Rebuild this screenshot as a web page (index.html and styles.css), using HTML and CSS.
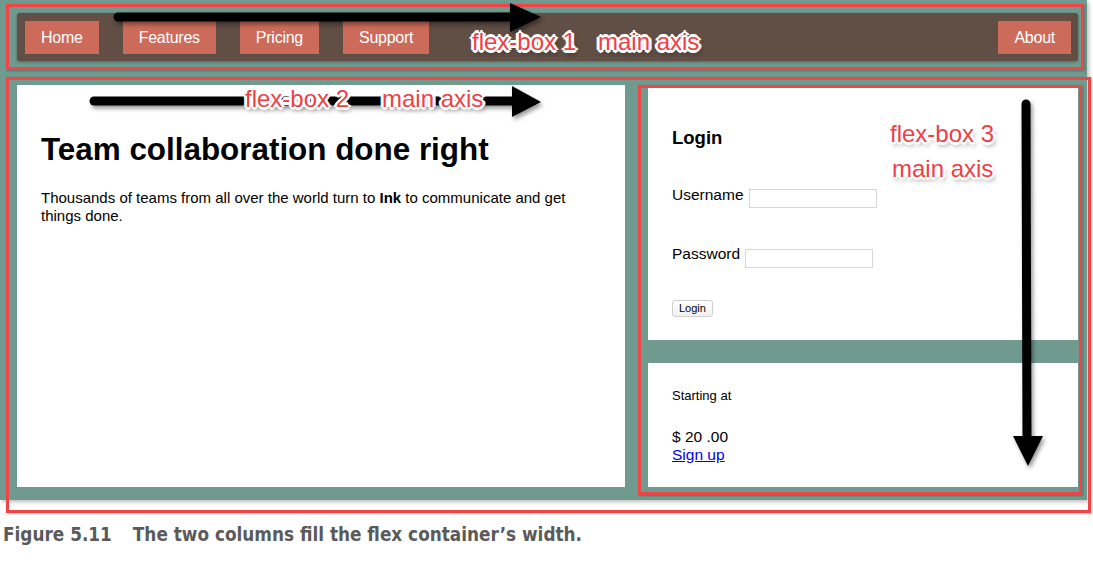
FILE: index.html
```html
<!DOCTYPE html>
<html>
<head>
<meta charset="utf-8">
<link rel="stylesheet" href="styles.css">
</head>
<body>
<div class="figure">
  <div class="screen">
    <nav class="site-nav">
      <a class="nav-link" href="#">Home</a>
      <a class="nav-link" href="#">Features</a>
      <a class="nav-link" href="#">Pricing</a>
      <a class="nav-link" href="#">Support</a>
      <a class="nav-link nav-right" href="#">About</a>
    </nav>
    <main class="columns">
      <section class="tile column-main">
        <h2 class="hero-title">Team collaboration done right</h2>
        <p class="hero-text">Thousands of teams from all over the world turn to <b>Ink</b> to communicate and get things done.</p>
      </section>
      <aside class="column-sidebar">
        <div class="tile login">
          <h3 class="login-title">Login</h3>
          <div class="field field-user"><span class="field-label">Username</span><span class="input"></span></div>
          <div class="field field-pass"><span class="field-label">Password</span><span class="input"></span></div>
          <span class="login-btn">Login</span>
        </div>
        <div class="tile pricing">
          <p class="price-intro">Starting at</p>
          <p class="price">$ 20 .00</p>
          <a class="signup" href="#">Sign up</a>
        </div>
      </aside>
    </main>
  </div>
  <p class="caption"><span class="fig-no">Figure 5.11</span>The two columns fill the flex container’s width.</p>

  <div class="frame frame-1"></div>
  <div class="frame frame-2"></div>
  <div class="frame frame-3"></div>

  <svg class="arrows" width="1093" height="569" viewBox="0 0 1093 569">
    <g fill="#000" stroke="#000">
      <line x1="118" y1="17" x2="514" y2="17" stroke-width="9" stroke-linecap="round"/>
      <polygon points="510,3 541,17 510,32" stroke="none"/>
      <line x1="94" y1="101" x2="515" y2="101" stroke-width="9" stroke-linecap="round"/>
      <polygon points="512,86 541,102 512,117" stroke="none"/>
      <line x1="1026" y1="104" x2="1027" y2="440" stroke-width="9" stroke-linecap="round"/>
      <polygon points="1013,436 1043,436 1028,466" stroke="none"/>
    </g>
  </svg>

  <span class="note note-1a">flex-box 1</span>
  <span class="note note-1b">main axis</span>
  <span class="note note-2a">flex-box 2</span>
  <span class="note note-2b">main axis</span>
  <span class="note note-3a">flex-box 3</span>
  <span class="note note-3b">main axis</span>
</div>
</body>
</html>
```

FILE: styles.css
```css
* { box-sizing: border-box; }
html, body { margin: 0; padding: 0; background: #fff; }
body { font-family: "Liberation Sans", Arial, sans-serif; color: #000; }

.figure { position: relative; width: 1093px; height: 569px; overflow: hidden; }

.screen {
  width: 1087px;
  height: 500px;
  background: #709a8f;
  padding: 13px 9px 13px 17px;
  box-shadow: 2px 2px 4px rgba(0,0,0,.25);
}

.site-nav {
  display: flex;
  height: 48px;
  padding: 8px 7px 7px 8px;
  background: #614e45;
  border-radius: 3px;
  box-shadow: 0 1px 3px rgba(0,0,0,.35);
}
.nav-link {
  display: block;
  padding: 8px 16px;
  background: #cc6b5a;
  color: #fff;
  text-decoration: none;
  font-size: 16px;
  line-height: 17px;
  letter-spacing: -0.25px;
}
.nav-link + .nav-link { margin-left: 24px; }
.nav-link.nav-right { margin-left: auto; }

.columns {
  display: flex;
  gap: 23px;
  height: 402px;
  margin-top: 24px;
}
.tile { background: #fff; }
.column-main {
  width: 608px;
  padding: 47px 24px 24px 24px;
}
.hero-title {
  margin: 0;
  font-size: 31.4px;
  line-height: 36px;
  font-weight: bold;
}
.hero-text {
  margin: 21px 0 0;
  font-size: 15px;
  line-height: 18px;
}

.column-sidebar {
  flex: 1;
  display: flex;
  flex-direction: column;
  gap: 23px;
}
.login {
  height: 255px;
  padding: 42px 24px 0 24px;
}
.login-title {
  margin: 0;
  font-size: 18.5px;
  line-height: 21px;
  font-weight: bold;
}
.field {
  display: flex;
  align-items: flex-start;
  font-size: 15.5px;
  line-height: 18px;
}
.field-user { margin-top: 38px; }
.field-pass { margin-top: 37px; }
.input {
  display: block;
  width: 128px;
  height: 19px;
  margin: 3px 0 0 5px;
  border: 1px solid #d6d6d6;
  background: #fff;
}
.field-pass .input { margin-top: 4px; }
.login-btn {
  display: inline-block;
  margin-top: 32px;
  height: 17px;
  padding: 0 6px;
  border: 1px solid #cfcfcf;
  border-radius: 3px;
  background: linear-gradient(#fff, #f1f1f1);
  font-size: 11px;
  line-height: 15px;
}

.pricing {
  flex: 1;
  padding: 25px 24px 0 24px;
}
.price-intro {
  margin: 0;
  font-size: 13px;
  line-height: 16px;
}
.price {
  margin: 24px 0 0;
  font-size: 15.5px;
  line-height: 18px;
}
.signup {
  display: block;
  font-size: 15.5px;
  line-height: 18px;
  color: #0000ee;
  text-decoration: underline;
}

.caption {
  margin: 24px 0 0 3px;
  font-family: "DejaVu Sans Condensed", "DejaVu Sans", sans-serif;
  font-stretch: condensed;
  font-weight: bold;
  font-size: 18.8px;
  line-height: 22px;
  color: #5a5a5a;
  white-space: nowrap;
}
.fig-no { margin-right: 21px; }

.frame {
  position: absolute;
  border: 3px solid #ee4646;
  box-shadow: 1px 1px 2px rgba(0,0,0,.25);
}
.frame-1 { left: 6px; top: 4px; width: 1078px; height: 66px; }
.frame-2 { left: 6px; top: 77px; width: 1085px; height: 436px; }
.frame-3 { left: 638px; top: 85px; width: 444px; height: 410px; }

.arrows {
  position: absolute;
  left: 0;
  top: 0;
  filter: drop-shadow(2px 3px 2px rgba(0,0,0,.4));
}

.note {
  position: absolute;
  font-family: "Liberation Sans", Arial, sans-serif;
  font-size: 24px;
  line-height: 28px;
  color: #ee4046;
  white-space: nowrap;
  text-shadow:
    2px 0 #fff, -2px 0 #fff, 0 2px #fff, 0 -2px #fff,
    1.5px 1.5px #fff, -1.5px -1.5px #fff, 1.5px -1.5px #fff, -1.5px 1.5px #fff,
    3px 0 #fff, -3px 0 #fff, 0 3px #fff, 0 -3px #fff,
    2px 4px 4px rgba(0,0,0,.45);
}
.note-1a { left: 472px; top: 28px; }
.note-1b { left: 598px; top: 28px; }
.note-2a { left: 245px; top: 85px; }
.note-2b { left: 382px; top: 85px; }
.note-3a { left: 890px; top: 120px; }
.note-3b { left: 892px; top: 155px; }
```
